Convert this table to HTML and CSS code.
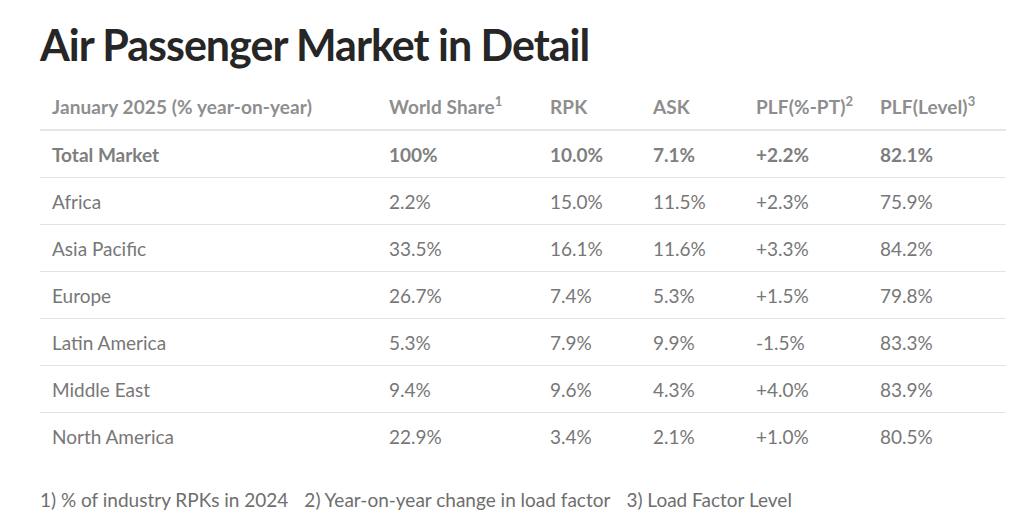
FILE: index.html
```html
<!DOCTYPE html>
<html>
<head>
<meta charset="utf-8">
<link rel="stylesheet" href="styles.css">
</head>
<body>
<div class="page">
  <h1 class="title">Air Passenger Market in Detail</h1>
  <table class="market">
    <colgroup>
      <col class="c1"><col class="c2"><col class="c3"><col class="c4"><col class="c5"><col class="c6">
    </colgroup>
    <thead>
      <tr>
        <th>January 2025 (% year-on-year)</th>
        <th>World Share<sup>1</sup></th>
        <th>RPK</th>
        <th>ASK</th>
        <th>PLF(%-PT)<sup>2</sup></th>
        <th>PLF(Level)<sup>3</sup></th>
      </tr>
    </thead>
    <tbody>
      <tr class="total"><td>Total Market</td><td>100%</td><td>10.0%</td><td>7.1%</td><td>+2.2%</td><td>82.1%</td></tr>
      <tr><td>Africa</td><td>2.2%</td><td>15.0%</td><td>11.5%</td><td>+2.3%</td><td>75.9%</td></tr>
      <tr><td>Asia Pacific</td><td>33.5%</td><td>16.1%</td><td>11.6%</td><td>+3.3%</td><td>84.2%</td></tr>
      <tr><td>Europe</td><td>26.7%</td><td>7.4%</td><td>5.3%</td><td>+1.5%</td><td>79.8%</td></tr>
      <tr><td>Latin America</td><td>5.3%</td><td>7.9%</td><td>9.9%</td><td>-1.5%</td><td>83.3%</td></tr>
      <tr><td>Middle East</td><td>9.4%</td><td>9.6%</td><td>4.3%</td><td>+4.0%</td><td>83.9%</td></tr>
      <tr class="last"><td>North America</td><td>22.9%</td><td>3.4%</td><td>2.1%</td><td>+1.0%</td><td>80.5%</td></tr>
    </tbody>
  </table>
  <p class="notes"><span>1) % of industry RPKs in 2024</span><span>2) Year-on-year change in load factor</span><span>3) Load Factor Level</span></p>
</div>
</body>
</html>
```
FILE: styles.css
```css
html, body {
  margin: 0;
  padding: 0;
  background: #ffffff;
}
body {
  font-family: Lato, "Open Sans", sans-serif;
  color: #777777;
}
.page {
  padding: 0 18px 0 40px;
}
.title {
  margin: 0;
  padding-top: 18px;
  font-size: 43px;
  line-height: 54px;
  font-weight: 700;
  letter-spacing: -1px;
  color: #262626;
}
.market {
  width: 966px;
  border-collapse: collapse;
  margin-top: 11px;
  font-size: 19px;
}
.c1 { width: 337px; }
.c2 { width: 161px; }
.c3 { width: 103px; }
.c4 { width: 103px; }
.c5 { width: 124px; }
.c6 { width: auto; }
.market th {
  text-align: left;
  font-weight: 700;
  color: #8e8e8e;
  padding: 0 0 0 12px;
  height: 46px;
  vertical-align: middle;
  border-bottom: 2px solid #e6e6e6;
  letter-spacing: 0.1px;
}
.market th sup {
  font-size: 13px;
  line-height: 0;
  vertical-align: 8px;
}
.market td {
  padding: 0 0 0 12px;
  height: 46px;
  border-bottom: 1px solid #e3e3e3;
  vertical-align: middle;
}
.market tr.last td {
  border-bottom: none;
}
.market tr.total td {
  font-weight: 700;
  color: #7e7e7e;
}
.notes {
  margin: 29px 0 0 0;
  font-size: 19px;
  color: #6e6e6e;
  display: flex;
  gap: 16px;
}
```
